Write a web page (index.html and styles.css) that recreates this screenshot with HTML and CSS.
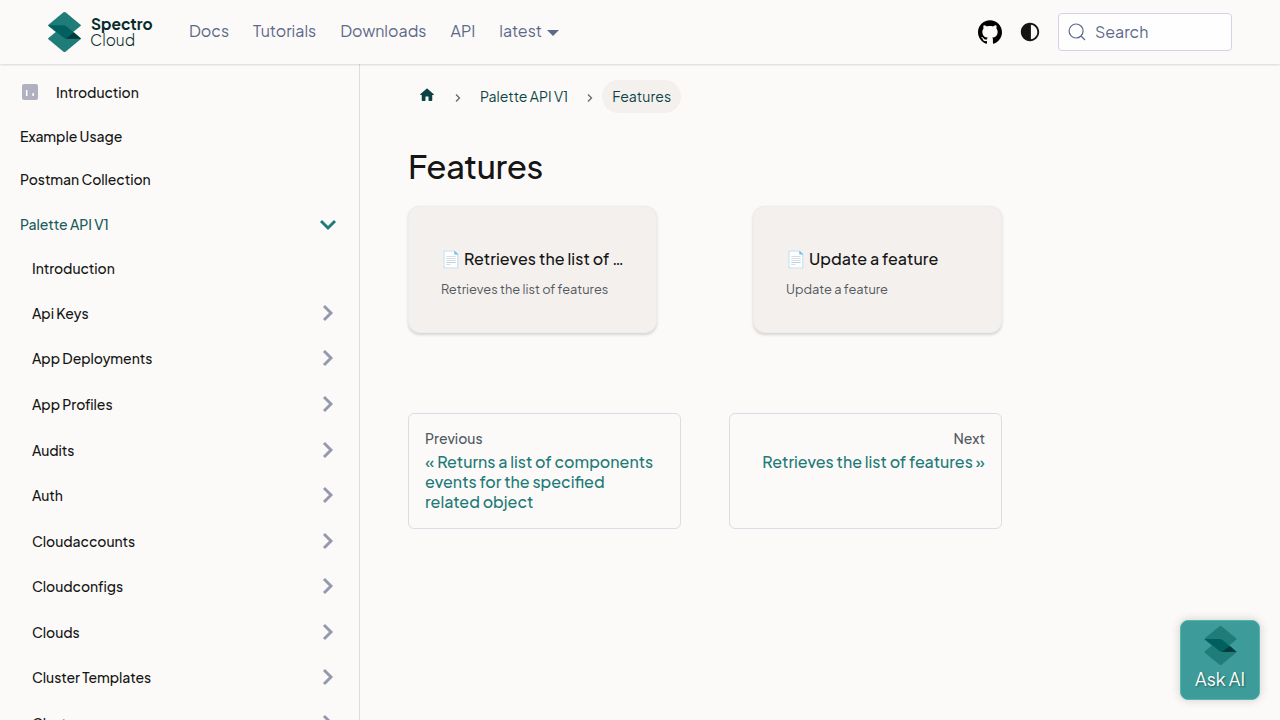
FILE: index.html
```html
<!DOCTYPE html>
<html lang="en">
<head>
<meta charset="utf-8">
<title>Features | Spectro Cloud</title>
<link rel="stylesheet" href="styles.css">
</head>
<body>
<svg class="defs" width="0" height="0" aria-hidden="true">
  <symbol id="mark" viewBox="0 0 96 117">
    <path fill="#207c79" d="M45 1Q48-1 51 1L95 37Q97 39 95 41L51 77Q48 79 45 77L1 41Q-1 39 1 37Z"/>
    <path fill="#207c79" d="M45 40Q48 38 51 40L95 76Q97 78 95 80L51 116Q48 118 45 116L1 80Q-1 78 1 76Z"/>
    <path fill="#005f5f" d="M0 39H44Q50 39 55 43L96 78H54Q49 78 44 74Z"/>
    <path fill="#053b3c" d="M76 60L96 78H52Z"/>
  </symbol>
  <symbol id="chevron" viewBox="0 0 24 24"><path d="M9 5l7 7-7 7" fill="none" stroke="currentColor" stroke-width="2.9"/></symbol>
  <symbol id="crumb" viewBox="0 0 8 10"><path d="M2 1.500l3.500 3.500-3.500 3.500" fill="none" stroke="#666" stroke-width="1.3"/></symbol>
</svg>
<header class="navbar">
  <a class="brand"><svg class="brand-mark"><use href="#mark"/></svg><span class="brand-name"><b>Spectro</b><span>Cloud</span></span></a>
  <nav class="nav-links"><a>Docs</a><a>Tutorials</a><a>Downloads</a><a class="api">API</a><a class="latest">latest<i class="caret"></i></a></nav>
  <div class="nav-tools">
    <svg class="github" viewBox="0 0 24 24"><path d="M12 .297c-6.63 0-12 5.373-12 12 0 5.303 3.438 9.8 8.205 11.385.6.113.82-.258.82-.577 0-.285-.01-1.04-.015-2.04-3.338.724-4.042-1.61-4.042-1.61C4.422 18.07 3.633 17.7 3.633 17.7c-1.087-.744.084-.729.084-.729 1.205.084 1.838 1.236 1.838 1.236 1.07 1.835 2.809 1.305 3.495.998.108-.776.417-1.305.76-1.605-2.665-.3-5.466-1.332-5.466-5.93 0-1.31.465-2.38 1.235-3.22-.135-.303-.54-1.523.105-3.176 0 0 1.005-.322 3.3 1.23.96-.267 1.98-.399 3-.405 1.02.006 2.04.138 3 .405 2.28-1.552 3.285-1.23 3.285-1.23.645 1.653.24 2.873.12 3.176.765.84 1.23 1.91 1.23 3.22 0 4.61-2.805 5.625-5.475 5.92.42.36.81 1.096.81 2.22 0 1.606-.015 2.896-.015 3.286 0 .315.21.69.825.57C20.565 22.092 24 17.592 24 12.297c0-6.627-5.373-12-12-12"/></svg>
    <svg class="theme" viewBox="0 0 24 24"><path fill="#151515" d="M12 22c5.52 0 10-4.48 10-10S17.52 2 12 2 2 6.48 2 12s4.48 10 10 10zm1-17.93c3.94.49 7 3.85 7 7.93s-3.05 7.44-7 7.93V4.07z"/></svg>
    <div class="search"><svg viewBox="0 0 20 20" width="20" height="20"><path d="M14 14l4 4M14 14A7 7 0 1 1 14 4A7 7 0 0 1 14 14Z" fill="none" stroke="#5d698a" stroke-width="1.2"/></svg><span>Search</span></div>
  </div>
</header>
<div class="page">
  <aside class="sidebar">
    <a class="item"><svg class="chart" viewBox="0 0 16 16"><rect width="16" height="16" rx="2" fill="#afb1bf"/><path d="M4.700 6v6M11.200 9v3" stroke="#fff" stroke-width="1.6"/></svg><span>Introduction</span></a>
    <a class="item"><span>Example Usage</span></a>
    <a class="item"><span>Postman Collection</span></a>
    <a class="item category open"><span>Palette API V1</span><svg><use href="#chevron"/></svg></a>
    <div class="children">
      <a class="item"><span>Introduction</span></a>
      <a class="item category"><span>Api Keys</span><svg><use href="#chevron"/></svg></a>
      <a class="item category"><span>App Deployments</span><svg><use href="#chevron"/></svg></a>
      <a class="item category"><span>App Profiles</span><svg><use href="#chevron"/></svg></a>
      <a class="item category"><span>Audits</span><svg><use href="#chevron"/></svg></a>
      <a class="item category"><span>Auth</span><svg><use href="#chevron"/></svg></a>
      <a class="item category"><span>Cloudaccounts</span><svg><use href="#chevron"/></svg></a>
      <a class="item category"><span>Cloudconfigs</span><svg><use href="#chevron"/></svg></a>
      <a class="item category"><span>Clouds</span><svg><use href="#chevron"/></svg></a>
      <a class="item category"><span>Cluster Templates</span><svg><use href="#chevron"/></svg></a>
      <a class="item category"><span>Clusters</span><svg><use href="#chevron"/></svg></a>
    </div>
  </aside>
  <main class="content">
    <nav class="crumbs">
      <svg class="home" viewBox="0 0 24 24"><path fill="#0b4345" d="M10 19v-5h4v5c0 .55.45 1 1 1h3c.55 0 1-.45 1-1v-7h1.700c.46 0 .68-.57.33-.87L12.670 3.600c-.38-.34-.96-.34-1.340 0l-8.360 7.530c-.34.3-.13.870.33.870H5v7c0 .55.45 1 1 1h3c.55 0 1-.45 1-1z"/></svg>
      <svg class="sep"><use href="#crumb"/></svg>
      <a class="crumb">Palette API V1</a>
      <svg class="sep"><use href="#crumb"/></svg>
      <span class="crumb current">Features</span>
    </nav>
    <h1>Features</h1>
    <section class="cards">
      <a class="card"><h2>📄️ Retrieves the list of features</h2><p>Retrieves the list of features</p></a>
      <a class="card"><h2>📄️ Update a feature</h2><p>Update a feature</p></a>
    </section>
    <nav class="pager">
      <a class="pager-link"><small>Previous</small><span>« Returns a list of components<br>events for the specified<br>related object</span></a>
      <a class="pager-link next"><small>Next</small><span>Retrieves the list of features »</span></a>
    </nav>
  </main>
</div>
<button class="ask"><svg><use href="#mark"/></svg><span>Ask AI</span></button>
</body>
</html>
```
FILE: styles.css
```css
* { box-sizing: border-box; }
body { margin: 0; height: 720px; overflow: hidden; background: #fbfaf8; color: #151515; font-family: "Plus Jakarta Sans", Inter, sans-serif; font-size: 16px; }
.defs { position: absolute; }
.navbar { position: relative; z-index: 2; display: flex; align-items: center; height: 64px; padding: 0 48px; background: #fbfaf8; box-shadow: 0 1px 2px rgba(0,0,0,.14); }
.brand { display: flex; width: 141px; gap: 9px; }
.brand-mark { width: 33px; height: 40px; }
.brand-name { display: flex; flex-direction: column; padding-top: 4px; font-size: 16px; line-height: 16px; color: #062b2b; }
.brand-name b { font-size: 15.5px; font-weight: 700; padding-left: 1px; }
.brand-name span { font-size: 15.5px; font-weight: 300; }
.nav-links { display: flex; gap: 24px; color: #5d698a; line-height: 24px; padding-bottom: 2px; }
.latest { display: flex; align-items: center; gap: 5px; }
.caret { margin-top: 4px; border: 6px solid transparent; border-top-color: #5d698a; border-bottom: 0; }
.nav-tools { display: flex; align-items: center; margin-left: auto; }
.github { width: 24px; height: 24px; margin-right: 17px; }
.theme { width: 22px; height: 22px; margin-right: 17px; }
.search { display: flex; align-items: center; gap: 8px; width: 174px; height: 38px; padding-left: 8px; border: 1px solid #d3d3e5; border-radius: 4px; background: #fefefe; color: #5d698a; }
.search span { padding-bottom: 2px; }
.page { display: flex; height: 656px; }
.sidebar { width: 360px; height: 656px; flex: none; padding: 6.2px 20px 0; border-right: 1px solid #dadde1; overflow: hidden; font-size: 14px; font-weight: 500; letter-spacing: -.06px; }
.item { display: flex; align-items: center; height: 43.6px; }
.category { height: 45.55px; justify-content: space-between; }
.category svg { width: 24px; height: 24px; margin-right: -1px; color: #9699ad; }
.open { color: #1a5b5c; }
.open svg { color: #1f7a78; transform: rotate(90deg); }
.children { padding-left: 12px; }
.children .category svg { margin-right: -.4px; }
.chart { width: 16px; height: 16px; margin: 1px 18px 0 2px; }
.content { width: 690px; padding: 16px 48px; }
.crumbs { display: flex; align-items: center; height: 33px; font-size: 14px; color: #0b4345; }
.home { width: 18px; height: 18px; margin: 0 18px 4px 10px; }
.sep { width: 8px; height: 10px; margin-top: 2px; }
.crumb { padding: 8px 10px; line-height: 17px; white-space: nowrap; }
.sep + .crumb { margin-left: 8px; margin-right: 8px; }
.sep + .crumb.current { margin-left: 8px; margin-right: 0; border-radius: 17px; background: #f4f0ed; letter-spacing: .1px; }
h1 { margin: 32px 0 19px; font-size: 33px; line-height: 42px; font-weight: 500; letter-spacing: -.4px; }
.cards { display: flex; gap: 96px; }
.card { width: 249px; height: 127px; padding: 40px 32px; border: 1px solid #ebedf0; border-radius: 12px; background: #f4f0ed; box-shadow: 0 1.5px 3px rgba(0,0,0,.15); }
.card h2 { margin: 0 0 8px; font-size: 16px; line-height: 24px; font-weight: 500; letter-spacing: .08px; overflow: hidden; text-overflow: ellipsis; white-space: nowrap; }
.card p { margin: 0; font-size: 12.8px; line-height: 20px; color: #525860; white-space: nowrap; letter-spacing: .03px; }
.pager { display: flex; gap: 48px; margin-top: 80px; }
.pager-link { width: 273px; height: 116px; padding: 15px 16px; border: 1px solid #dadde6; border-radius: 6px; line-height: 20px; color: #1f7a78; font-weight: 500; white-space: nowrap; }
.pager-link small { display: block; font-size: 14px; color: #525860; line-height: 18px; }
.pager-link small + span { display: block; margin-top: 5px; }
.next { text-align: right; }
.ask { position: absolute; left: 1180px; top: 620px; width: 80px; height: 80px; padding: 5px 0 0; display: flex; flex-direction: column; align-items: center; border: 1px solid #55b5ad; border-radius: 8px; background: #3d9c99; color: #fff; box-shadow: 0 0 10px rgba(0,0,0,.18); font-family: "Plus Jakarta Sans", Inter, sans-serif; }
.ask svg { width: 33px; height: 39px; }
.ask span { font-size: 18px; line-height: 28px; text-shadow: 1px 1px 2px rgba(0,0,0,.4); }
```
